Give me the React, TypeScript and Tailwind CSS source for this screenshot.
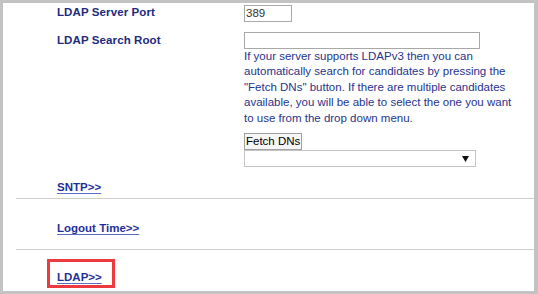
import React from 'react';

const font = { fontFamily: '"Liberation Sans", Arial, sans-serif' };

function Label({ children }: { children: React.ReactNode }) {
  return (
    <div className="h-[17px] flex items-center whitespace-nowrap text-[11.5px] font-bold text-[#1d2a7e] tracking-[0.1px]">
      {children}
    </div>
  );
}

function NavLink({ children }: { children: React.ReactNode }) {
  return (
    <a href="#" className="whitespace-nowrap text-[11.5px] leading-[15px] font-bold text-[#1f2f9c] underline underline-offset-[2px] decoration-[#5a6fc4]">
      {children}
    </a>
  );
}

export default function App() {
  return (
    <div
      style={font}
      className="w-[538px] h-[294px] box-border border-l-[3px] border-t-[3px] border-r-[4px] border-b-[3px] border-[#c3c3c3] bg-white overflow-hidden"
    >
      <div className="pl-[54px] pt-[2px] grid grid-cols-[187px_1fr]">
        <div className="-mt-[1px]">
          <Label>LDAP Server Port</Label>
        </div>
        <div>
          <div className="w-[48px] h-[17px] border border-[#a8a8a8] bg-white text-[11.5px] leading-[15px] pl-[1px] text-[#333]">
            389
          </div>
        </div>

        <div className="mt-[10px]">
          <Label>LDAP Search Root</Label>
        </div>
        <div className="mt-[10px]">
          <div className="w-[236px] h-[17px] border border-[#a8a8a8] bg-white" />
          <p className="w-[276px] text-[11.5px] leading-[15.4px] text-[#27338c]">
            If your server supports LDAPv3 then you can automatically search for candidates by pressing the
            "Fetch DNs" button. If there are multiple candidates available, you will be able to select the one
            you want to use from the drop down menu.
          </p>
          <div className="mt-[7px] flex">
            <button className="h-[17px] whitespace-nowrap border border-[#a0a0a0] bg-[#f6f6f6] text-[11.5px] leading-[15px] text-black px-[1px]">
              Fetch DNs
            </button>
          </div>
          <div className="w-[232px] h-[17px] border border-[#c4c4c4] bg-white flex items-center justify-end pr-[6px]">
            <svg width="7" height="6" viewBox="0 0 7 6">
              <path d="M0 0H7L3.5 6Z" fill="#111" />
            </svg>
          </div>
        </div>
      </div>

      <div className="h-[31px] pl-[54px] pt-[7px]">
        <NavLink>SNTP&gt;&gt;</NavLink>
      </div>
      <div className="ml-[13px] h-px bg-[#cfcfcf]" />

      <div className="h-[50px] pl-[54px] pt-[16px]">
        <NavLink>Logout Time&gt;&gt;</NavLink>
      </div>
      <div className="ml-[13px] h-px bg-[#cfcfcf]" />

      <div className="pl-[44px] pt-[9px]">
        <div className="w-[68px] h-[29px] border-[3px] border-[#ec3a3f] pl-[7px] pt-[2px]">
          <NavLink>LDAP&gt;&gt;</NavLink>
        </div>
      </div>
    </div>
  );
}
